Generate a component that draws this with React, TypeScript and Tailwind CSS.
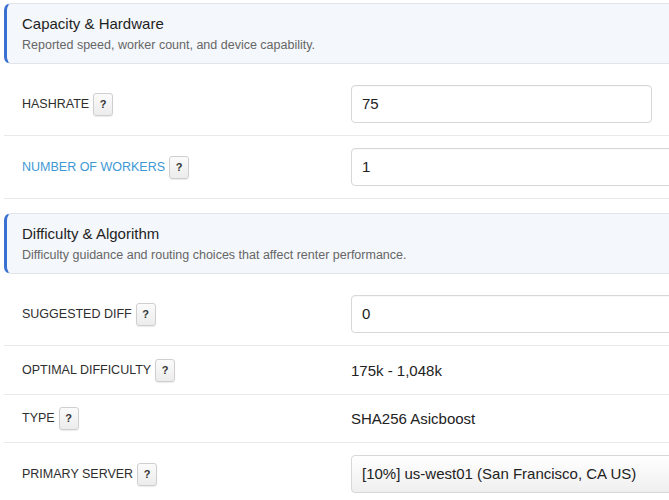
import React from "react";

const font = { fontFamily: '"Liberation Sans", Arial, sans-serif' };

function Help() {
  return (
    <span className="ml-[4px] inline-flex h-[23px] w-[20px] items-center justify-center rounded-[3px] border border-[#cfcfcf] bg-gradient-to-b from-[#fbfbfb] to-[#ececec] text-[11px] font-bold text-[#333] shadow-[0_1px_1px_rgba(0,0,0,0.08)]">
      ?
    </span>
  );
}

function SectionHeader({ title, subtitle, className }: { title: string; subtitle: string; className?: string }) {
  return (
    <div
      className={`rounded-l-[7px] border-y border-l-[3px] border-y-[#e1e5ea] border-l-[#3a70cf] bg-[#f4f7fb] pl-[15px] pt-[10px] pb-[10px] ${className ?? ""}`}
    >
      <div className="text-[15px] leading-[20px] text-[#1f1f1f]">{title}</div>
      <div className="mt-[3px] text-[12.5px] leading-[16px] text-[#666]">{subtitle}</div>
    </div>
  );
}

function Label({ text, blue }: { text: string; blue?: boolean }) {
  return (
    <div className="flex items-center pl-[18px]">
      <span className={`text-[12.5px] ${blue ? "text-[#3d98d3]" : "text-[#2e2e2e]"}`}>{text}</span>
      <Help />
    </div>
  );
}

function InputRow({ label, value, blue, width }: { label: string; value: string; blue?: boolean; width: string }) {
  return (
    <div className="grid grid-cols-[347px_1fr] items-center border-b border-[#e9e9e9] py-[12px]">
      <Label text={label} blue={blue} />
      <div
        className={`${width} flex h-[38px] items-center rounded-[4px] border border-[#d7d7d7] bg-white pl-[10px] text-[15px] text-[#222] shadow-[inset_0_1px_1px_rgba(0,0,0,0.03)]`}
      >
        {value}
      </div>
    </div>
  );
}

function TextRow({ label, value, pad }: { label: string; value: string; pad: string }) {
  return (
    <div className={`grid grid-cols-[347px_1fr] items-center border-b border-[#e9e9e9] ${pad}`}>
      <Label text={label} />
      <div className="text-[15px] leading-[20px] text-[#222]">{value}</div>
    </div>
  );
}

export default function App() {
  return (
    <div className="h-[500px] w-[669px] overflow-hidden bg-white" style={font}>
      <div className="w-[760px] pl-[4px] pt-[3px]">
        <SectionHeader
          title="Capacity & Hardware"
          subtitle="Reported speed, worker count, and device capability."
          className="mb-[9px]"
        />
        <InputRow label="HASHRATE" value="75" width="w-[301px]" />
        <InputRow label="NUMBER OF WORKERS" value="1" blue width="w-[360px]" />

        <SectionHeader
          title="Difficulty & Algorithm"
          subtitle="Difficulty guidance and routing choices that affect renter performance."
          className="mt-[14px] mb-[9px]"
        />
        <InputRow label="SUGGESTED DIFF" value="0" width="w-[360px]" />
        <TextRow label="OPTIMAL DIFFICULTY" value="175k - 1,048k" pad="pt-[13px] pb-[12px]" />
        <TextRow label="TYPE" value="SHA256 Asicboost" pad="py-[12px]" />

        <div className="grid grid-cols-[347px_1fr] items-center py-[12px]">
          <Label text="PRIMARY SERVER" />
          <div className="flex h-[38px] w-[360px] items-center rounded-[4px] border border-[#d7d7d7] bg-gradient-to-b from-white to-[#efefef] pl-[10px] text-[15px] text-[#222]">
            [10%] us-west01 (San Francisco, CA US)
          </div>
        </div>
      </div>
    </div>
  );
}
